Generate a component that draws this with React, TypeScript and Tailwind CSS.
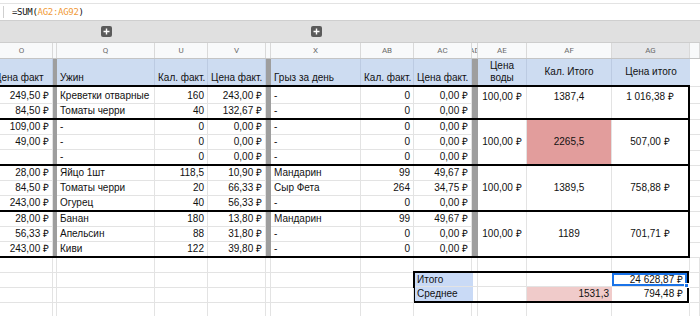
import React from 'react'

type Row = [string, string, string, string, string, string, string]

type Group = {
  rows: Row[]
  ae: string
  af: string
  ag: string
  top?: boolean
  hot?: boolean
}

const groups: Group[] = [
  {
    rows: [
      ['249,50 ₽', 'Креветки отварные', '160', '243,00 ₽', '-', '0', '0,00 ₽'],
      ['84,50 ₽', 'Томаты черри', '40', '132,67 ₽', '-', '0', '0,00 ₽'],
    ],
    ae: '100,00 ₽',
    af: '1387,4',
    ag: '1 016,38 ₽',
    top: true,
  },
  {
    rows: [
      ['109,00 ₽', '-', '0', '0,00 ₽', '-', '0', '0,00 ₽'],
      ['49,00 ₽', '-', '0', '0,00 ₽', '-', '0', '0,00 ₽'],
      ['', '-', '0', '0,00 ₽', '-', '0', '0,00 ₽'],
    ],
    ae: '100,00 ₽',
    af: '2265,5',
    ag: '507,00 ₽',
    hot: true,
  },
  {
    rows: [
      ['28,00 ₽', 'Яйцо 1шт', '118,5', '10,90 ₽', 'Мандарин', '99', '49,67 ₽'],
      ['84,50 ₽', 'Томаты черри', '20', '66,33 ₽', 'Сыр Фета', '264', '34,75 ₽'],
      ['243,00 ₽', 'Огурец', '40', '56,33 ₽', '-', '0', '0,00 ₽'],
    ],
    ae: '100,00 ₽',
    af: '1389,5',
    ag: '758,88 ₽',
  },
  {
    rows: [
      ['28,00 ₽', 'Банан', '180', '13,80 ₽', 'Мандарин', '99', '49,67 ₽'],
      ['56,33 ₽', 'Апельсин', '88', '31,80 ₽', '-', '0', '0,00 ₽'],
      ['243,00 ₽', 'Киви', '122', '39,80 ₽', '-', '0', '0,00 ₽'],
    ],
    ae: '100,00 ₽',
    af: '1189',
    ag: '701,71 ₽',
  },
]

const PlusButton = () => (
  <div className="w-[11px] h-[11px] rounded-[2px] bg-[#5b5b5b] flex items-center justify-center">
    <svg width="7" height="7" viewBox="0 0 7 7">
      <path d="M3.5 0.5v6M0.5 3.5h6" stroke="#fff" strokeWidth="1.4" />
    </svg>
  </div>
)

const DataRow = ({ r, last, tall }: { r: Row; last: boolean; tall: boolean }) => {
  const c = `h-full flex items-end px-[3px] border-r ${last ? '' : 'border-b'} border-[#e3e3e3] whitespace-nowrap overflow-hidden`
  const h = tall ? 'h-[17px]' : last ? 'h-[14px]' : 'h-[15px]'
  return (
    <div className={`flex ${h}`}>
      <div className={`${c} w-[62px] justify-end`}>{r[0]}</div>
      <div className="w-[4px] h-full bg-[#9e9e9e]" />
      <div className={`${c} w-[98px]`}>{r[1]}</div>
      <div className={`${c} w-[53px] justify-end`}>{r[2]}</div>
      <div className={`${c} w-[58px] justify-end`}>{r[3]}</div>
      <div className="w-[5px] h-full bg-[#9e9e9e]" />
      <div className={`${c} w-[90px]`}>{r[4]}</div>
      <div className={`${c} w-[53px] justify-end`}>{r[5]}</div>
      <div className={`${c} w-[58px] justify-end`}>{r[6]}</div>
      <div className="w-[6px] h-full bg-[#9e9e9e]" />
    </div>
  )
}

export default function App() {
  const hd = 'h-full flex items-end px-[3px] border-r border-[#bccbe2] whitespace-nowrap overflow-hidden'
  const ch = 'h-full flex items-center justify-center border-r border-[#d9d9d9] overflow-hidden'
  const e = 'border-r border-b border-[#e3e3e3]'

  return (
    <div className="w-[700px] h-[316px] overflow-hidden bg-white text-[10px] leading-[14px] text-[#111] font-['Liberation_Sans',Arial,sans-serif]">
      {/* formula bar */}
      <div className="h-[4px] border-b border-[#e3e3e3]" />
      <div className="h-[17px] flex items-center border-b border-[#cfcfcf]">
        <div className="w-px h-[12px] bg-[#cfcfcf] ml-[3px]" />
        <div className="ml-[8px] text-[9px] tracking-[-0.3px] font-['DejaVu_Sans_Mono',monospace]">
          =SUM(<span className="text-[#f09a36]">AG2:AG92</span>)
        </div>
      </div>

      <div className="ml-[-9px] w-[709px]">
        {/* group toggles */}
        <div className="flex h-[22px] bg-[#e0e0e0] border-b border-[#cdcdcd]">
          <div className="w-[66px]" />
          <div className="w-[98px] flex items-center justify-center">
            <PlusButton />
          </div>
          <div className="w-[116px]" />
          <div className="w-[90px] flex items-center justify-center">
            <PlusButton />
          </div>
        </div>

        {/* column letters */}
        <div className="flex h-[16px] bg-[#f8f9fa] border-b border-[#c4c4c4] text-[8px] text-[#6a6a6a] font-['Roboto',sans-serif]">
          <div className={`${ch} w-[62px]`}>O</div>
          <div className={`${ch} w-[4px]`} />
          <div className={`${ch} w-[98px]`}>Q</div>
          <div className={`${ch} w-[53px]`}>U</div>
          <div className={`${ch} w-[58px]`}>V</div>
          <div className={`${ch} w-[5px]`} />
          <div className={`${ch} w-[90px]`}>X</div>
          <div className={`${ch} w-[53px]`}>AB</div>
          <div className={`${ch} w-[58px]`}>AC</div>
          <div className={`${ch} w-[6px]`}>AD</div>
          <div className={`${ch} w-[49px]`}>AE</div>
          <div className={`${ch} w-[85px]`}>AF</div>
          <div className={`${ch} w-[78px] bg-[#e6e7e9]`}>AG</div>
          <div className={`${ch} flex-1`} />
        </div>

        {/* header */}
        <div className="flex h-[28px]">
          <div className="flex bg-[#cddcf1] border-b-2 border-black">
            <div className={`${hd} w-[62px]`}>Цена факт</div>
            <div className="w-[4px] h-full bg-[#9e9e9e]" />
            <div className={`${hd} w-[98px]`}>Ужин</div>
            <div className={`${hd} w-[53px] px-[2px]`}>Кал. факт.</div>
            <div className={`${hd} w-[58px] px-[2px]`}>Цена факт.</div>
            <div className="w-[5px] h-full bg-[#9e9e9e]" />
            <div className={`${hd} w-[90px]`}>Грыз за день</div>
            <div className={`${hd} w-[53px] px-[2px]`}>Кал. факт.</div>
            <div className={`${hd} w-[58px] px-[2px]`}>Цена факт.</div>
            <div className="w-[6px] h-full bg-[#9e9e9e]" />
            <div className="w-[49px] h-full flex items-center justify-center text-center leading-[12px] border-r border-[#bccbe2]">
              Цена
              <br />
              воды
            </div>
            <div className="w-[85px] h-full flex items-center justify-center border-r border-[#bccbe2]">Кал. Итого</div>
            <div className="w-[78px] h-full flex items-center justify-center">Цена итого</div>
          </div>
          <div className="flex-1 border-b border-[#e3e3e3]" />
        </div>

        {/* data groups */}
        {groups.map((g, gi) => (
          <div key={gi} className="flex">
            <div className="flex border-b-2 border-black">
              <div className="w-[487px] flex flex-col">
                {g.rows.map((r, ri) => (
                  <DataRow key={ri} r={r} last={ri === g.rows.length - 1} tall={gi === 0 && ri === 0} />
                ))}
              </div>
              <div className={`w-[49px] flex justify-center border-r border-[#e3e3e3] ${g.top ? 'items-start pt-[3px]' : 'items-center'}`}>
                {g.ae}
              </div>
              <div
                className={`w-[85px] flex justify-center border-r border-[#e3e3e3] ${g.top ? 'items-start pt-[3px]' : 'items-center'} ${g.hot ? 'bg-[#e29d9c]' : ''}`}
              >
                {g.af}
              </div>
              <div className={`w-[78px] flex justify-center border-r-2 border-black ${g.top ? 'items-start pt-[3px]' : 'items-center'}`}>
                {g.ag}
              </div>
            </div>
            <div className="flex-1 flex flex-col">
              {g.rows.map((_, ri) => (
                <div key={ri} className="flex-1 border-b border-[#e3e3e3]" />
              ))}
            </div>
          </div>
        ))}

        {/* empty rows + summary */}
        <div className="grid grid-cols-[62px_4px_98px_53px_58px_5px_90px_53px_58px_6px_49px_85px_78px_1fr] grid-rows-[15px_15px_15px_15px]">
          {Array.from({ length: 14 }).map((_, i) => (
            <div key={`a${i}`} className={e} />
          ))}
          {Array.from({ length: 8 }).map((_, i) => (
            <div key={`b${i}`} className={e} />
          ))}
          <div className="col-span-5 row-span-2 mt-[-2px] ml-[-1px] mr-px border-2 border-black flex flex-col bg-white">
            <div className="flex h-[14px] border-b border-[#e3e3e3]">
              <div className="w-[58px] bg-[#c9daf6] px-[2px] flex items-center">Итого</div>
              <div className="w-[5px] border-r border-[#e3e3e3]" />
              <div className="w-[49px] border-r border-[#e3e3e3]" />
              <div className="w-[85px]" />
              <div className="relative flex-1 border-2 border-[#1a73e8] flex items-center justify-end pr-[2px]">
                24 628,87 ₽
                <div className="absolute right-[-4px] bottom-[-4px] w-[5px] h-[5px] bg-[#1a73e8] border border-white" />
              </div>
            </div>
            <div className="flex flex-1">
              <div className="w-[58px] bg-[#c9daf6] px-[2px] flex items-center">Среднее</div>
              <div className="w-[5px] border-r border-[#e3e3e3]" />
              <div className="w-[49px] border-r border-[#e3e3e3]" />
              <div className="w-[85px] bg-[#f0cbca] flex items-center justify-end pr-[3px]">1531,3</div>
              <div className="flex-1 flex items-center justify-end pr-[4px]">794,48 ₽</div>
            </div>
          </div>
          <div className={e} />
          {Array.from({ length: 8 }).map((_, i) => (
            <div key={`c${i}`} className={e} />
          ))}
          <div className={e} />
          {Array.from({ length: 14 }).map((_, i) => (
            <div key={`d${i}`} className={e} />
          ))}
        </div>
      </div>
    </div>
  )
}
